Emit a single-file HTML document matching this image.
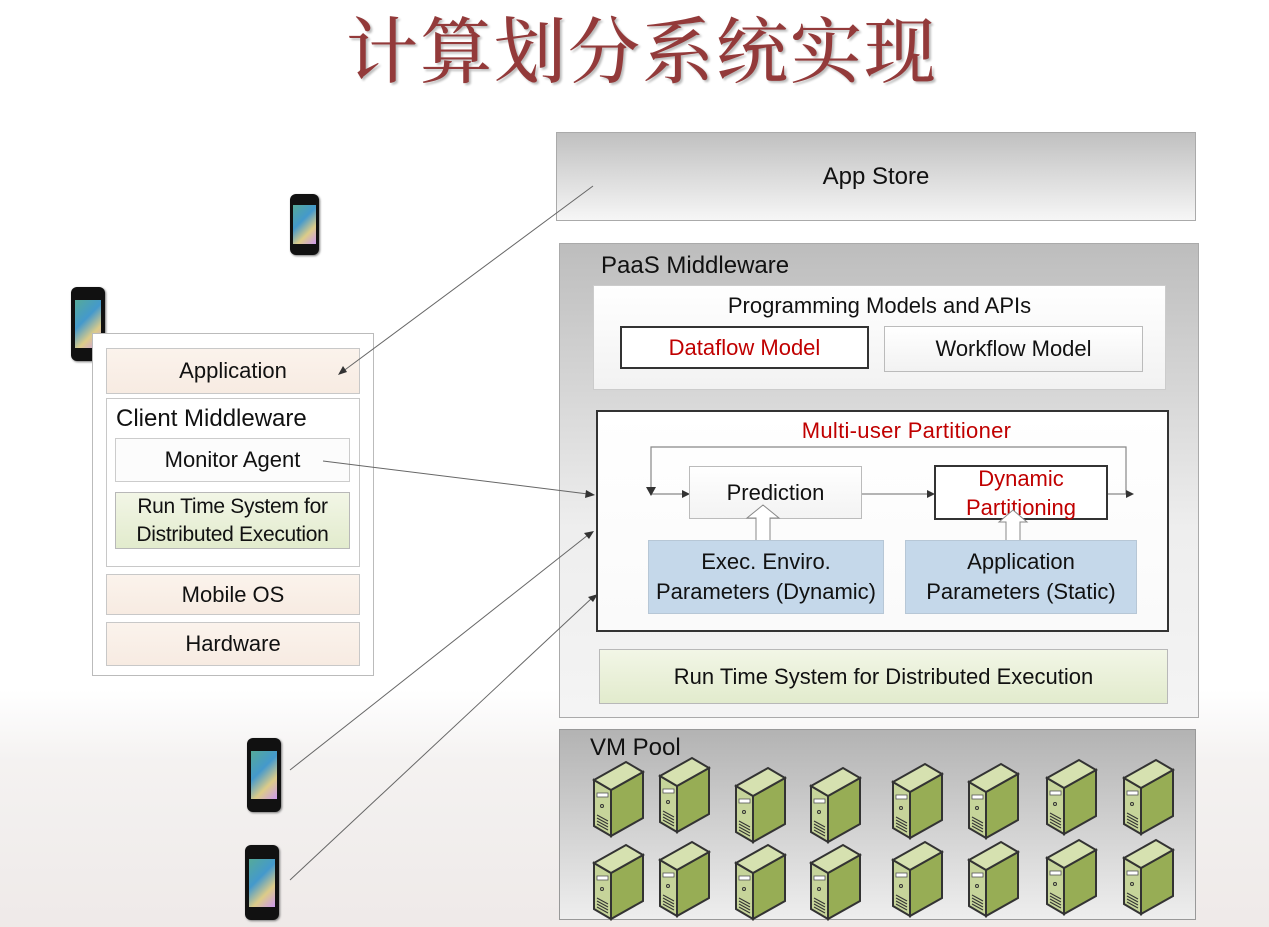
<!DOCTYPE html>
<html><head><meta charset="utf-8"><style>
body{margin:0;width:1269px;height:927px;position:relative;overflow:hidden;background:#fff;font-family:"Liberation Sans",sans-serif;color:#111;letter-spacing:0}
.a{position:absolute;box-sizing:border-box}
.t{display:flex;align-items:center;justify-content:center;text-align:center;line-height:30px}
.bg{position:absolute;left:0;top:690px;width:1269px;height:237px;background:linear-gradient(180deg,rgba(255,255,255,0) 0,rgba(200,190,185,.2) 30%,rgba(190,170,165,.25) 100%)}
.title{position:absolute;left:346px;top:-6px;font-family:"Noto Serif CJK SC",serif;font-size:72px;color:#933a3a;letter-spacing:2px;text-shadow:2px 2px 2px #bbb;font-weight:500}
.peach{background:linear-gradient(#fbf3ec,#f7ebe2);border:1px solid #c8c8c8}
.green{background:linear-gradient(#f2f6e6,#e2ebcd);border:1px solid #b8b8b8}
.blue{background:#c5d8ea;border:1px solid #b7c7d6}
.phone{position:absolute;background:#111;border-radius:6px;box-shadow:1px 1px 2px #777}
.phone i{position:absolute;left:12%;right:12%;top:18%;bottom:18%;background:linear-gradient(135deg,#5a9,#49c 40%,#dc8 70%,#c9e)}
</style></head><body>
<div class="bg"></div>
<div class="title">计算划分系统实现</div>

<div class="phone" style="left:290px;top:194px;width:29px;height:61px"><i></i></div>
<div class="phone" style="left:71px;top:287px;width:34px;height:74px"><i></i></div>
<div class="phone" style="left:247px;top:738px;width:34px;height:74px"><i></i></div>
<div class="phone" style="left:245px;top:845px;width:34px;height:75px"><i></i></div>

<!-- left client -->
<div class="a" style="left:92px;top:333px;width:282px;height:343px;border:1px solid #bbb;background:#fff"></div>
<div class="a t peach" style="left:106px;top:348px;width:254px;height:46px;font-size:22px">Application</div>
<div class="a" style="left:106px;top:398px;width:254px;height:169px;border:1px solid #c8c8c8;background:#fff"></div>
<div class="a" style="left:116px;top:405px;font-size:24px">Client Middleware</div>
<div class="a t" style="left:115px;top:438px;width:235px;height:44px;font-size:22px;border:1px solid #ccc;background:#fcfcfc">Monitor Agent</div>
<div class="a t green" style="left:115px;top:492px;width:235px;height:57px;font-size:21px;line-height:28px;letter-spacing:-0.3px">Run Time System for<br>Distributed Execution</div>
<div class="a t peach" style="left:106px;top:574px;width:254px;height:41px;font-size:22px">Mobile OS</div>
<div class="a t peach" style="left:106px;top:622px;width:254px;height:44px;font-size:22px">Hardware</div>

<!-- App store -->
<div class="a t" style="left:556px;top:132px;width:640px;height:89px;border:1px solid #aaa;background:linear-gradient(#c0c0c0,#f6f6f6);font-size:24px">App Store</div>

<!-- PaaS -->
<div class="a" style="left:559px;top:243px;width:640px;height:475px;border:1px solid #aaa;background:linear-gradient(#bdbdbd,#eeeeee 60%,#f4f4f4)"></div>
<div class="a" style="left:601px;top:252px;font-size:24px">PaaS Middleware</div>
<div class="a" style="left:593px;top:285px;width:573px;height:105px;border:1px solid #ccc;background:linear-gradient(#fff,#f2f2f2)"></div>
<div class="a t" style="left:593px;top:291px;width:573px;height:30px;font-size:22px">Programming Models and APIs</div>
<div class="a t" style="left:620px;top:326px;width:249px;height:43px;border:2px solid #333;background:#fff;color:#c00000;font-size:22px">Dataflow Model</div>
<div class="a t" style="left:884px;top:326px;width:259px;height:46px;border:1px solid #bbb;background:linear-gradient(#fff,#f2f2f2);font-size:22px">Workflow Model</div>

<div class="a" style="left:596px;top:410px;width:573px;height:222px;border:2px solid #333;background:linear-gradient(#fff,#fafafa)"></div>
<div class="a t" style="left:620px;top:416px;width:573px;height:30px;color:#c00000;font-size:22px;letter-spacing:0.3px">Multi-user Partitioner</div>
<svg class="a" style="left:596px;top:410px" width="573" height="222">
<g fill="none" stroke="#888" stroke-width="1.2">
<path d="M54 84 H86"/><path d="M265 84 H334"/><path d="M512 84 H530 V37 H55 V78"/>
</g>
<g fill="#333"><path d="M86 80 L94 84 L86 88Z"/><path d="M331 80 L339 84 L331 88Z"/><path d="M530 80 L538 84 L530 88Z"/><path d="M50 77 L55 86 L60 77Z"/></g>
</svg>
<div class="a t" style="left:689px;top:466px;width:173px;height:53px;border:1px solid #bbb;background:linear-gradient(#fff,#f3f3f3);font-size:22px">Prediction</div>
<div class="a t" style="left:934px;top:465px;width:174px;height:55px;border:2px solid #333;background:#fff;color:#c00000;font-size:22px;line-height:29px">Dynamic<br>Partitioning</div>
<svg class="a" style="left:596px;top:410px" width="573" height="222"><g fill="#fff" stroke="#888"><path d="M160 132 V108 H151 L167 95 L183 108 H174 V132Z"/><path d="M410 132 V112 H403 L417 100 L431 112 H424 V132Z"/></g></svg>
<div class="a t blue" style="left:648px;top:540px;width:236px;height:74px;font-size:22px">Exec. Enviro.<br>Parameters (Dynamic)</div>
<div class="a t blue" style="left:905px;top:540px;width:232px;height:74px;font-size:22px">Application<br>Parameters (Static)</div>

<div class="a t green" style="left:599px;top:649px;width:569px;height:55px;font-size:22px">Run Time System for Distributed Execution</div>

<!-- VM pool -->
<div class="a" style="left:559px;top:729px;width:637px;height:191px;border:1px solid #999;background:linear-gradient(#b3b3b3,#eeeeee)"></div>
<div class="a" style="left:590px;top:734px;font-size:24px">VM Pool</div>
<svg width="0" height="0" style="position:absolute"><defs>
<g id="srv">
<path d="M1 22 L18 32 L18 78 L1 68Z" fill="#c6d49a" stroke="#333" stroke-width="2"/>
<path d="M18 32 L50 14 L50 60 L18 78Z" fill="#97ad55" stroke="#333" stroke-width="2"/>
<path d="M1 22 L33 4 L50 14 L18 32Z" fill="#d6e1b0" stroke="#333" stroke-width="2"/>
<rect x="4" y="35" width="11" height="4" fill="#fff" stroke="#555" stroke-width=".8"/>
<circle cx="9" cy="48" r="1.5" fill="none" stroke="#333"/>
<path d="M4 57 L15 63 M4 60 L15 66 M4 63 L15 69 M4 66 L15 72" stroke="#333" stroke-width="1"/>
</g></defs></svg>
<svg class="a" style="left:0;top:0" width="1269" height="927">
<g>
<use href="#srv" x="593" y="758"/><use href="#srv" x="659" y="754"/><use href="#srv" x="735" y="764"/><use href="#srv" x="810" y="764"/><use href="#srv" x="892" y="760"/><use href="#srv" x="968" y="760"/><use href="#srv" x="1046" y="756"/><use href="#srv" x="1123" y="756"/>
<use href="#srv" x="593" y="841"/><use href="#srv" x="659" y="838"/><use href="#srv" x="735" y="841"/><use href="#srv" x="810" y="841"/><use href="#srv" x="892" y="838"/><use href="#srv" x="968" y="838"/><use href="#srv" x="1046" y="836"/><use href="#srv" x="1123" y="836"/>
</g>
<g stroke="#666" stroke-width="1" fill="none">
<path d="M593 186 L342 372"/><path d="M323 461 L588 494"/><path d="M290 770 L588 535"/><path d="M290 880 L592 598"/>
</g>
<g fill="#333">
<path d="M338 375 L343 366 L347 372Z"/>
<path d="M595 495 L586 490 L585 498Z"/>
<path d="M594 531 L584 533 L589 539Z"/>
<path d="M598 594 L588 597 L593 602Z"/>
</g>
</svg>
</body></html>
